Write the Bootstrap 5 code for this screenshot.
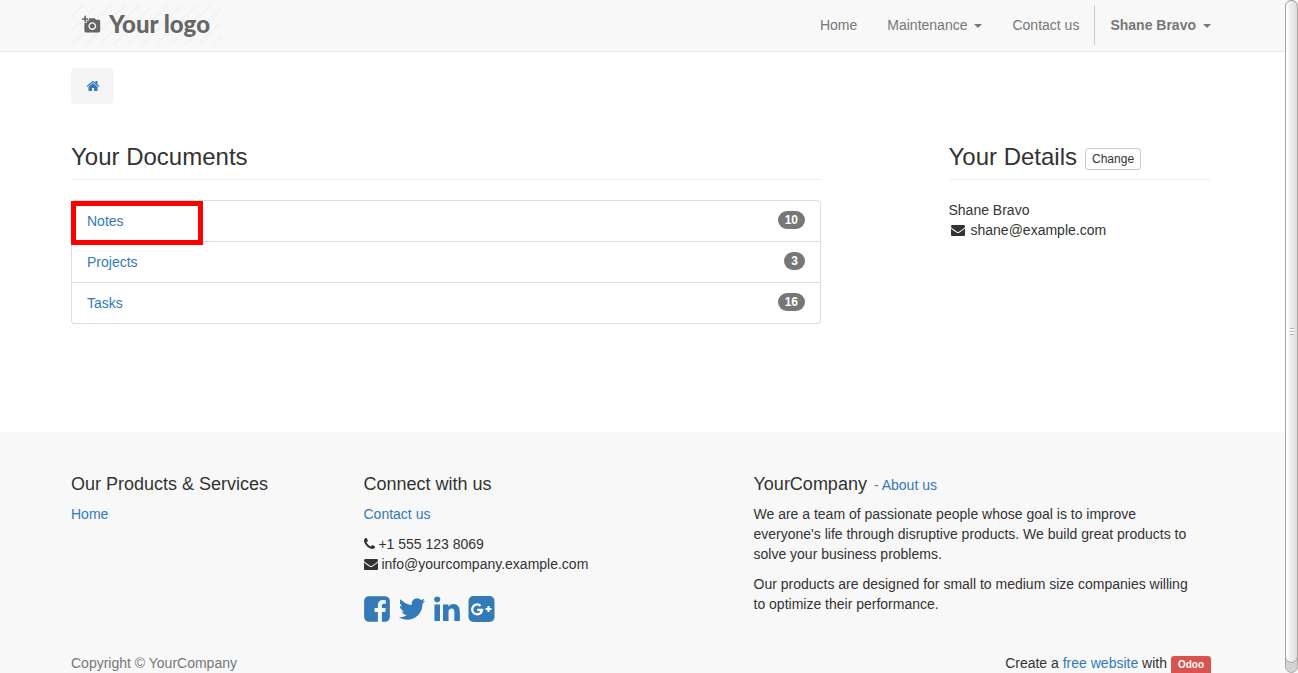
<!DOCTYPE html>
<html lang="en">
<head>
<meta charset="utf-8">
<meta name="viewport" content="width=device-width, initial-scale=1">
<title>My Account | YourCompany</title>
<link rel="stylesheet" href="https://cdn.jsdelivr.net/npm/bootstrap@5.3.0/dist/css/bootstrap.min.css">
<style>
  body { font: 14px/20px "Liberation Sans", Arial, sans-serif; color: #333; background: #fff; }
  a { color: #337ab7; text-decoration: none; }
  a:hover { text-decoration: underline; }
  p { margin-bottom: 10px; }
  .page { height: 100vh; overflow-y: auto; scrollbar-width: none; }
  .page::-webkit-scrollbar { display: none; }
  .band { padding-right: 16px; }
  .band .container { max-width: 1170px; padding-left: 15px; padding-right: 15px; }
  .row { --bs-gutter-x: 30px; }
  .icon { fill: currentColor; width: 14px; height: 14px; vertical-align: -2px; }
  .icon-phone { width: 11px; }

  .site-header { background: #f8f8f8; border-bottom: 1px solid #e7e7e7; }
  .site-header .navbar { padding: 0 0 1px; min-height: 51px; }
  .site-header .navbar-brand { display: flex; align-items: center; gap: 8px; width: 150px; height: 40px; margin: 0; padding: 0 0 2px 11px;
    font: 900 24px/38px Lato, sans-serif; color: #666;
    background: repeating-linear-gradient(135deg, #f8f8f8 0 7px, #f4f4f4 7px 10px); }
  .site-header .navbar-brand svg { width: 19px; height: 19px; fill: currentColor; }
  .site-header .navbar-nav { margin-right: -15px; }
  .site-header .navbar-nav .nav-link { padding: 10px 15px; color: #777; }
  .site-header .nav-account { border-left: 1px solid #ccc; }
  .dropdown-toggle::after { margin-left: 7px; border-width: 4px 4px 0; vertical-align: 2px; }

  .crumb { display: inline-block; background: #f5f5f5; border-radius: 4px; padding: 11px 15px; margin-top: 16px; }
  .crumb a { display: block; width: 13px; }
  .section-title { display: flex; align-items: center; gap: 8px; margin: 35px 0 20px; padding-bottom: 9px; border-bottom: 1px solid #eee; }
  .section-title h3 { font-size: 24px; line-height: 26px; font-weight: 400; margin: 0; }
  .btn-change { font-size: 12px; line-height: 18px; padding: 1px 6px; border: 1px solid #ccc; border-radius: 3px; color: #333; background: #fff; margin-top: 2px; margin-bottom: -2px; }
  .mail-line { display: flex; align-items: center; gap: 6px; padding-left: 2px; }
  .list-group { --bs-list-group-border-color: #ddd; --bs-list-group-border-radius: 4px; --bs-list-group-item-padding-x: 15px; --bs-list-group-item-padding-y: 10px; margin-bottom: 108px; }
  .list-group-item { line-height: 20px; }
  .count { background: #777; font-size: 12px; line-height: 12px; padding: 3px 7px; border-radius: 10px; margin-bottom: 2px; }
  .highlight { position: absolute; left: -1px; top: 0; width: 132px; height: 44px; border: 5px solid #f00; z-index: 2; pointer-events: none; }

  .site-footer { background: #f8f8f8; padding-top: 42px; padding-bottom: 20px; }
  .site-footer h4 { font-size: 18px; line-height: 20px; font-weight: 400; margin: 0 0 10px; }
  .site-footer small { font-size: 14px; line-height: 14px; color: #777; margin-left: 2px; }
  .about-text { padding-right: 12px; }
  .social { display: flex; gap: 5px; margin: 20px 0 29px -2px; }
  .social a { display: block; height: 30px; }
  .social svg { display: block; width: 30px; height: 30px; fill: currentColor; }
  .copyright { color: #777; }
  .odoo-tag { background: #d9534f; color: #fff; font-size: 10px; line-height: 14px; padding: 2px 7px 4px; border-radius: 3px; }

  .scroll-track { position: fixed; inset: 0 0 0 auto; width: 13px; background: #d5d4d2; border: 1px solid #aaa8a5; border-radius: 7px; }
  .scroll-thumb { position: absolute; inset: -1px -1px 9px; border: 1px solid #a8a6a3; border-radius: 7px; display: flex; align-items: center; justify-content: center;
    background: linear-gradient(90deg, #fff 0 2px, #f3f2f1 3px, #dfdedb); }
  .scroll-grip { width: 4px; height: 7px; background: repeating-linear-gradient(#b5b3b0 0 1px, #f8f8f8 1px 3px); }
</style>
</head>
<body>
<svg class="d-none" aria-hidden="true">
  <symbol id="envelope" viewBox="0 0 1792 1792"><path d="M1792 710v794q0 66-47 113t-113 47h-1472q-66 0-113-47t-47-113v-794q44 49 101 87 362 246 497 345 57 42 92.500 65.500t94.500 48 110 24.500h2q51 0 110-24.500t94.500-48 92.500-65.500q170-123 498-345 57-39 100-87zm0-294q0 79-49 151t-122 123q-376 261-468 325-10 7-42.500 31t-54 38.500-52 32.500-57.500 27-50 9h-2q-23 0-50-9t-57.500-27-52-32.500-54-38.500-42.500-31q-91-64-262-182.500t-205-142.500q-62-42-117-115.500t-55-136.500q0-78 41.500-130t118.500-52h1472q65 0 112.500 47t47.500 113z"/></symbol>
</svg>
<div class="page">
  <header class="site-header band">
    <div class="container">
      <nav class="navbar navbar-expand">
        <a class="navbar-brand" href="#">
          <svg viewBox="0 0 24 24" aria-hidden="true"><path d="M3 4V1h2v3h3v2H5v3H3V6H0V4h3zm3 6V7h3V4h7l1.830 2H21c1.100 0 2 .9 2 2v12c0 1.100-.9 2-2 2H5c-1.100 0-2-.9-2-2V10h3zm7 9c2.760 0 5-2.240 5-5s-2.240-5-5-5-5 2.240-5 5 2.240 5 5 5zm-3.200-5c0 1.770 1.430 3.200 3.200 3.200s3.200-1.430 3.200-3.200-1.430-3.200-3.200-3.200-3.200 1.430-3.200 3.200z"/></svg>
          <span>Your logo</span>
        </a>
        <ul class="navbar-nav ms-auto">
          <li class="nav-item"><a class="nav-link" href="#">Home</a></li>
          <li class="nav-item dropdown"><a class="nav-link dropdown-toggle" href="#" data-bs-toggle="dropdown">Maintenance</a></li>
          <li class="nav-item"><a class="nav-link" href="#">Contact us</a></li>
          <li class="nav-item dropdown nav-account"><a class="nav-link dropdown-toggle fw-bold" href="#" data-bs-toggle="dropdown">Shane Bravo</a></li>
        </ul>
      </nav>
    </div>
  </header>

  <main class="band">
    <div class="container">
      <nav class="crumb" aria-label="breadcrumb">
        <a href="#" aria-label="Home"><svg class="icon d-block" viewBox="0 0 1792 1792"><path d="M1472 992v480q0 26-19 45t-45 19h-384v-384h-256v384h-384q-26 0-45-19t-19-45v-480q0-1 .5-3t.5-3l575-474 575 474q1 2 1 6zm223-69l-62 74q-8 9-21 11h-3q-13 0-21-7l-692-577-692 577q-12 8-24 7-13-2-21-11l-62-74q-8-10-7-23.500t11-21.500l719-599q32-26 76-26t76 26l244 204v-195q0-14 9-23t23-9h192q14 0 23 9t9 23v408l219 182q10 8 11 21.500t-7 23.500z"/></svg></a>
      </nav>
      <div class="row">
        <section class="col-8">
          <div class="section-title"><h3>Your Documents</h3></div>
          <ul class="list-group">
            <li class="list-group-item d-flex justify-content-between align-items-center"><a href="#">Notes</a><span class="badge count">10</span><span class="highlight"></span></li>
            <li class="list-group-item d-flex justify-content-between align-items-center"><a href="#">Projects</a><span class="badge count">3</span></li>
            <li class="list-group-item d-flex justify-content-between align-items-center"><a href="#">Tasks</a><span class="badge count">16</span></li>
          </ul>
        </section>
        <section class="col-3 offset-1">
          <div class="section-title"><h3>Your Details</h3><button type="button" class="btn btn-change">Change</button></div>
          <address class="mb-0">
            <div>Shane Bravo</div>
            <div class="mail-line"><svg class="icon" aria-hidden="true"><use href="#envelope"/></svg><span>shane@example.com</span></div>
          </address>
        </section>
      </div>
    </div>
  </main>

  <footer class="site-footer band">
    <div class="container">
      <div class="row">
        <div class="col-3">
          <h4>Our Products &amp; Services</h4>
          <a href="#">Home</a>
        </div>
        <div class="col-4">
          <h4>Connect with us</h4>
          <p><a href="#">Contact us</a></p>
          <div><svg class="icon icon-phone" viewBox="192 0 1408 1792" aria-hidden="true"><path d="M1600 1240q0 27-10 70.500t-21 68.500q-21 50-122 106-94 51-186 51-27 0-53-3.500t-57.500-12.500-47-14.500-55.500-20.500-49-18q-98-35-175-83-127-79-264-216t-216-264q-48-77-83-175-3-9-18-49t-20.500-55.500-14.500-47-12.500-57.500-3.500-53q0-92 51-186 56-101 106-122 25-11 68.500-21t70.500-10q14 0 21 3 18 6 53 76 11 19 30 54t35 63.500 31 53.500q3 4 17.500 25t21.500 35.500 7 28.500q0 20-28.500 50t-62 55-62 53-28.500 46q0 9 5 22.500t8.500 20.500 14 24 11.500 19q76 137 174 235t235 174q2 1 19 11.500t24 14 20.500 8.500 22.500 5q18 0 46-28.500t53-62 55-62 50-28.500q14 0 28.500 7t35.500 21.500 25 17.500q25 15 53.500 31t63.500 35 54 30q70 35 76 53 3 7 3 21z"/></svg> +1 555 123 8069</div>
          <div><svg class="icon" aria-hidden="true"><use href="#envelope"/></svg> info@yourcompany.example.com</div>
          <div class="social">
            <a href="#" aria-label="Facebook"><svg viewBox="0 0 1792 1792"><path d="M1248 128q119 0 203.500 84.500t84.500 203.500v960q0 119-84.500 203.500t-203.500 84.500h-188v-595h199l30-232h-229v-148q0-56 23.500-84t91.500-28l122-1v-207q-63-9-178-9-136 0-217.500 80t-81.500 226v171h-200v232h200v595h-532q-119 0-203.500-84.500t-84.500-203.500v-960q0-119 84.500-203.500t203.500-84.500h960z" transform="translate(128)"/></svg></a>
            <a href="#" aria-label="Twitter"><svg viewBox="0 0 1792 1792"><path d="M1684 408q-67 98-162 167 1 14 1 42 0 130-38 259.500t-115.500 248.500-184.500 210.500-258 146-323 54.500q-271 0-496-145 35 4 78 4 225 0 401-138-105-2-188-64.500t-114-159.500q33 5 61 5 43 0 85-11-112-23-185.500-111.500t-73.500-205.500v-4q68 38 146 41-66-44-105-115t-39-154q0-88 44-163 121 149 294.500 238.500t371.500 99.500q-8-38-8-74 0-134 94.500-228.500t228.500-94.500q140 0 236 102 109-21 205-78-37 115-142 178 93-10 186-50z"/></svg></a>
            <a href="#" aria-label="LinkedIn"><svg viewBox="0 0 1792 1792"><path d="M477 625v991h-330v-991h330zm21-306q1 73-50.500 122t-135.500 49h-2q-82 0-132-49t-50-122q0-74 51.500-122.500t134.500-48.500 133 48.500 51 122.500zm1166 729v568h-329v-530q0-105-40.500-164.500t-126.500-59.500q-63 0-105.500 34.500t-63.500 85.500q-11 30-11 81v553h-329q2-399 2-647t-1-296l-1-48h329v144h-2q20-32 41-56t56.500-52 87-43.500 114.500-15.500q171 0 275 113.500t104 332.500z"/></svg></a>
            <a href="#" aria-label="Google Plus"><svg viewBox="0 0 30 30"><rect x="1.500" y="2" width="26" height="26" rx="5"/><path d="M13.500 11.800A4.900 4.900 0 1 0 15 15.800H10.200" fill="none" stroke="#fff" stroke-width="2.300"/><path d="M21.500 12v6M18.500 15h6" stroke="#fff" stroke-width="2"/></svg></a>
          </div>
        </div>
        <div class="col-5">
          <h4>YourCompany <small>- <a href="#">About us</a></small></h4>
          <div class="about-text">
            <p>We are a team of passionate people whose goal is to improve everyone's life through disruptive products. We build great products to solve your business problems.</p>
            <p>Our products are designed for small to medium size companies willing to optimize their performance.</p>
          </div>
        </div>
      </div>
      <div class="d-flex justify-content-between">
        <span class="copyright">Copyright © YourCompany</span>
        <span>Create a <a href="#">free website</a> with <a class="badge odoo-tag" href="#">Odoo</a></span>
      </div>
    </div>
  </footer>
</div>
<div class="scroll-track" aria-hidden="true"><div class="scroll-thumb"><div class="scroll-grip"></div></div></div>
<script src="https://cdn.jsdelivr.net/npm/bootstrap@5.3.0/dist/js/bootstrap.bundle.min.js"></script>
</body>
</html>
